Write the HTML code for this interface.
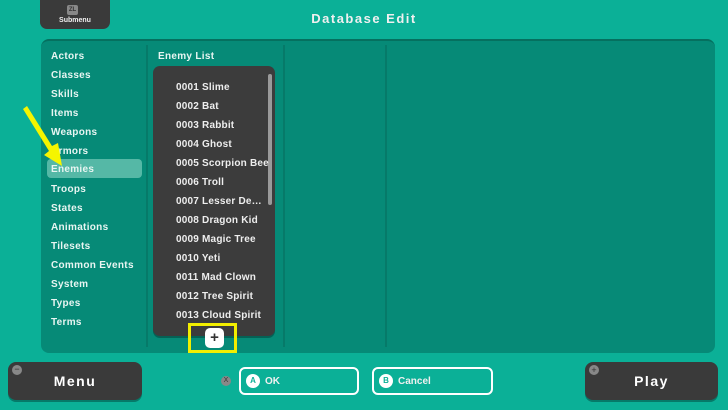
<!DOCTYPE html>
<html><head><meta charset="utf-8"><style>
*{margin:0;padding:0;box-sizing:border-box}
body{width:728px;height:410px;overflow:hidden;background:#0bb097;font-family:"Liberation Sans",sans-serif;color:#f0f0f0;position:relative}
.a{position:absolute}
.panel{left:41px;top:39px;width:674px;height:314px;background:#068a77;border-radius:8px;border-top:2px solid #05705f}
.div{top:45px;width:2px;height:302px;background:#067a69}
.menu{left:51px;font-size:10px;font-weight:bold;letter-spacing:.3px;color:#e8f5f2}
.hl{left:47px;top:159px;width:95px;height:19px;background:#55b8a6;border-radius:4px}
.list{left:153px;top:66px;width:122px;height:270px;background:#3c3c3c;border-radius:7px;box-shadow:0 2px 0 #046256}
.it{left:176px;font-size:10px;font-weight:bold;color:#eee;letter-spacing:.2px;white-space:nowrap}
.btn{background:#3a3a3a;border-radius:8px;color:#fff;font-weight:bold;text-align:center;box-shadow:0 2px 0 #067a69}
.ob{border:2px solid #fff;border-radius:6px;height:28px;width:120px;top:367px;font-size:10px;font-weight:bold}
.circ{width:14px;height:14px;border-radius:50%;background:#fff;color:#0bb097;font-size:8px;text-align:center;line-height:14px;font-weight:bold}
</style></head><body>
<div class="a" style="left:40px;top:-8px;width:70px;height:37px;background:#3a3a3a;border-radius:7px"></div>
<div class="a" style="left:67px;top:5px;width:11px;height:10px;background:#888;border-radius:2px;font-size:6px;color:#333;text-align:center;line-height:10px;font-weight:bold">ZL</div>
<div class="a" style="left:40px;top:17px;width:70px;text-align:center;font-size:7px;font-weight:bold">Submenu</div>
<div class="a" style="left:0;width:728px;top:11px;text-align:center;font-size:13px;font-weight:bold;letter-spacing:1.5px">Database Edit</div>
<div class="a panel"></div>
<div class="a div" style="left:146px"></div>
<div class="a div" style="left:283px"></div>
<div class="a div" style="left:385px"></div>
<div class="a hl"></div>
<div class="a menu" style="top:51px">Actors</div>
<div class="a menu" style="top:70px">Classes</div>
<div class="a menu" style="top:89px">Skills</div>
<div class="a menu" style="top:108px">Items</div>
<div class="a menu" style="top:127px">Weapons</div>
<div class="a menu" style="top:146px">Armors</div>
<div class="a menu" style="top:164px">Enemies</div>
<div class="a menu" style="top:184px">Troops</div>
<div class="a menu" style="top:203px">States</div>
<div class="a menu" style="top:222px">Animations</div>
<div class="a menu" style="top:241px">Tilesets</div>
<div class="a menu" style="top:260px">Common Events</div>
<div class="a menu" style="top:279px">System</div>
<div class="a menu" style="top:298px">Types</div>
<div class="a menu" style="top:317px">Terms</div>
<svg class="a" style="left:0;top:0" width="80" height="180"><polygon points="23,109 27,106 52,146 58,143 62,166 44,155 49,151" fill="#f5f500"/></svg>
<div class="a menu" style="left:158px;top:51px">Enemy List</div>
<div class="a list"></div>
<div class="a" style="left:268px;top:74px;width:4px;height:131px;background:#9a9a9a;border-radius:2px"></div>
<div class="a it" style="top:82px">0001 Slime</div>
<div class="a it" style="top:101px">0002 Bat</div>
<div class="a it" style="top:120px">0003 Rabbit</div>
<div class="a it" style="top:139px">0004 Ghost</div>
<div class="a it" style="top:158px">0005 Scorpion Bee</div>
<div class="a it" style="top:177px">0006 Troll</div>
<div class="a it" style="top:196px">0007 Lesser De…</div>
<div class="a it" style="top:215px">0008 Dragon Kid</div>
<div class="a it" style="top:234px">0009 Magic Tree</div>
<div class="a it" style="top:253px">0010 Yeti</div>
<div class="a it" style="top:272px">0011 Mad Clown</div>
<div class="a it" style="top:291px">0012 Tree Spirit</div>
<div class="a it" style="top:310px">0013 Cloud Spirit</div>
<div class="a" style="left:188px;top:323px;width:49px;height:30px;border:3px solid #f2ee00"></div>
<div class="a" style="left:205px;top:328px;width:19px;height:20px;background:#fff;border-radius:5px;color:#333;font-size:15px;font-weight:bold;text-align:center;line-height:20px">+</div>
<div class="a btn" style="left:8px;top:362px;width:134px;height:38px;line-height:38px;font-size:14px;letter-spacing:1.5px">Menu</div>
<div class="a" style="left:12px;top:365px;width:10px;height:10px;border-radius:50%;background:#888;font-size:9px;line-height:9px;text-align:center;color:#333">−</div>
<div class="a btn" style="left:585px;top:362px;width:133px;height:38px;line-height:38px;font-size:14px;letter-spacing:1.5px">Play</div>
<div class="a" style="left:589px;top:365px;width:10px;height:10px;border-radius:50%;background:#888;font-size:9px;line-height:10px;text-align:center;color:#333">+</div>
<div class="a" style="left:221px;top:376px;width:10px;height:10px;border-radius:50%;background:#888;font-size:7px;line-height:10px;text-align:center;color:#333">X</div>
<div class="a ob" style="left:239px"><div class="a circ" style="left:5px;top:5px">A</div><div class="a" style="left:24px;top:7px">OK</div></div>
<div class="a ob" style="left:372px;width:121px"><div class="a circ" style="left:5px;top:5px">B</div><div class="a" style="left:24px;top:7px">Cancel</div></div>
</body></html>
